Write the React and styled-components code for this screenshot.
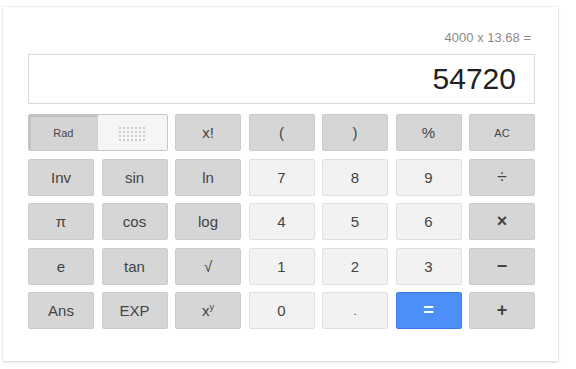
import React from 'react'
import styled, { createGlobalStyle } from 'styled-components'

const Global = createGlobalStyle`
  html, body {
    margin: 0;
    padding: 0;
    background: #fff;
    font-family: "Liberation Sans", Arial, sans-serif;
  }
`

const Page = styled.div`
  width: 576px;
  height: 369px;
  padding: 7px 18px 8px 3px;
  box-sizing: border-box;
`

const Card = styled.div`
  width: 555px;
  height: 354px;
  box-sizing: border-box;
  background: #fff;
  box-shadow: 0 1px 3px rgba(0, 0, 0, 0.16), 0 0 0 1px rgba(0, 0, 0, 0.03);
  padding: 23px 23px 0 25px;
`

const Expr = styled.div`
  text-align: right;
  font-size: 13px;
  line-height: 15px;
  color: #8a8a8a;
  padding-right: 4px;
  height: 24px;
`

const Display = styled.div`
  height: 50px;
  box-sizing: border-box;
  border: 1px solid #d9d9d9;
  display: flex;
  align-items: center;
  justify-content: flex-end;
  padding-right: 18px;
  font-size: 30px;
  color: #222;
  margin-bottom: 10px;
`

const Keys = styled.div`
  display: grid;
  grid-template-columns: repeat(7, 1fr);
  grid-auto-rows: 37px;
  column-gap: 7.5px;
  row-gap: 7.5px;
`

const palette = {
  dark: { bg: '#d6d6d6', border: '#cbcbcb', color: '#444' },
  light: { bg: '#f2f2f2', border: '#e0e0e0', color: '#444' },
  blue: { bg: '#4d8ff8', border: '#3b7ce9', color: '#fff' },
}

const Key = styled.div`
  display: flex;
  align-items: center;
  justify-content: center;
  box-sizing: border-box;
  border: 1px solid ${p => palette[p.$kind].border};
  border-radius: 2px;
  background: ${p => palette[p.$kind].bg};
  color: ${p => palette[p.$kind].color};
  font-size: ${p => (p.$small ? '11px' : p.$op ? '18px' : '15px')};
  font-weight: ${p => (p.$bold ? 'bold' : 'normal')};
  user-select: none;
`

const Toggle = styled.div`
  grid-column: span 2;
  display: flex;
  box-sizing: border-box;
  border: 1px solid #c6c6c6;
  border-radius: 2px;
  overflow: hidden;
`

const ToggleHalf = styled.div`
  flex: 1;
  display: flex;
  align-items: center;
  justify-content: center;
  font-size: 11px;
  color: #444;
  background: ${p => (p.$on ? '#d4d4d4' : '#f5f5f5')};
  box-shadow: ${p => (p.$on ? 'inset 2px 2px 0 #c2c2c2' : 'none')};
`

const Dots = styled.div`
  display: grid;
  grid-template-columns: repeat(7, 2px);
  grid-auto-rows: 2px;
  gap: 2px;
  margin-top: 2px;
  span {
    background: #cdcdcd;
  }
`

const Sup = styled.sup`
  font-size: 9px;
  vertical-align: 6px;
`

const keys = [
  ['x!', 'dark'], ['(', 'dark'], [')', 'dark'], ['%', 'dark'], ['AC', 'dark', { small: true }],
  ['Inv', 'dark'], ['sin', 'dark'], ['ln', 'dark'], ['7', 'light'], ['8', 'light'], ['9', 'light'], ['÷', 'dark', { op: true }],
  ['π', 'dark'], ['cos', 'dark'], ['log', 'dark'], ['4', 'light'], ['5', 'light'], ['6', 'light'], ['×', 'dark', { op: true, bold: true }],
  ['e', 'dark'], ['tan', 'dark'], ['√', 'dark'], ['1', 'light'], ['2', 'light'], ['3', 'light'], ['−', 'dark', { op: true, bold: true }],
  ['Ans', 'dark'], ['EXP', 'dark'], ['xy', 'dark'], ['0', 'light'], ['.', 'light', { small: true }], ['=', 'blue', { op: true, bold: true }], ['+', 'dark', { op: true, bold: true }],
]

export default function App() {
  return (
    <Page>
      <Global />
      <Card>
        <Expr>4000 x 13.68 =</Expr>
        <Display>54720</Display>
        <Keys>
          <Toggle>
            <ToggleHalf $on>Rad</ToggleHalf>
            <ToggleHalf>
              <Dots>
                {Array.from({ length: 28 }).map((_, i) => <span key={i} />)}
              </Dots>
            </ToggleHalf>
          </Toggle>
          {keys.map(([label, kind, opts = {}], i) => (
            <Key key={i} $kind={kind} $small={opts.small} $bold={opts.bold} $op={opts.op}>
              {label === 'xy' ? <span>x<Sup>y</Sup></span> : label}
            </Key>
          ))}
        </Keys>
      </Card>
    </Page>
  )
}
